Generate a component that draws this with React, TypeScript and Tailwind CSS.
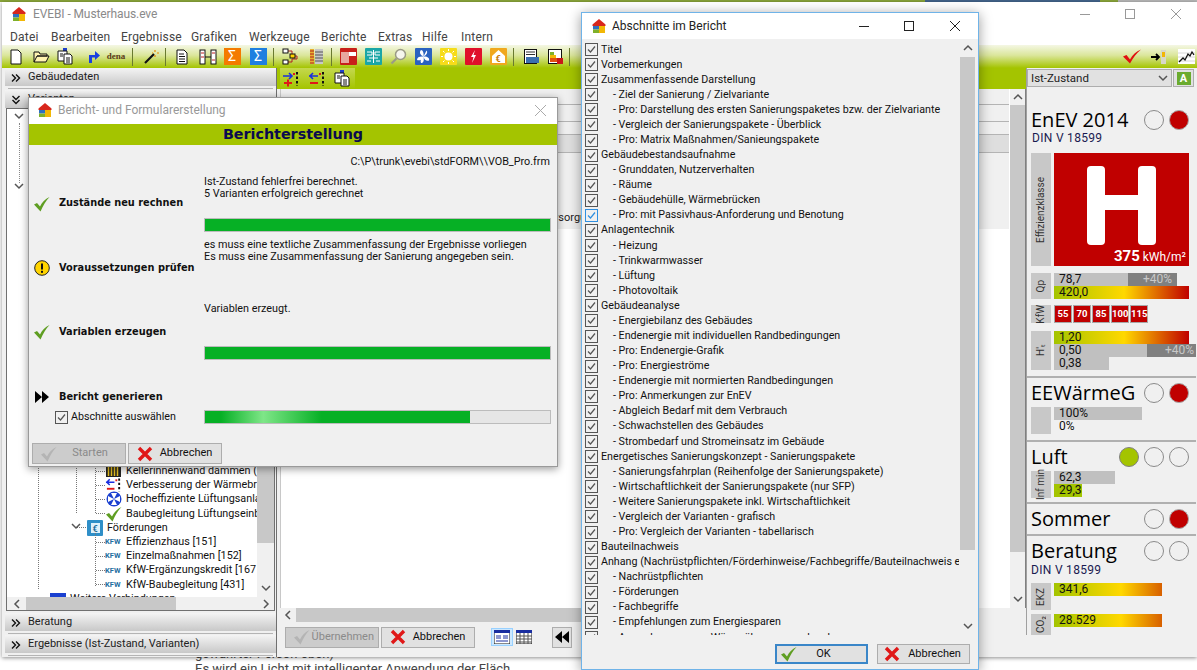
import type { ReactNode } from "react";

const Logo = ({ size = 14 }: { size?: number }) => (
  <svg width={size} height={size} viewBox="0 0 14 14">
    <path d="M7 0 13.5 5.5V7H.5V5.5Z" fill="#d8261c" />
    <rect x="1" y="7" width="6" height="3.5" fill="#2f6fc0" />
    <rect x="7" y="7" width="6" height="7" fill="#f2b705" />
    <rect x="1" y="10.5" width="6" height="3.5" fill="#7fb02a" />
  </svg>
);

const Check = ({ size = 16, color = "#5f9e22" }: { size?: number; color?: string }) => (
  <svg width={size} height={size} viewBox="0 0 16 16">
    <path d="M0 8.5 3 7l3 3.5C8 6.5 11 3 15.5 1 11.500 5 9 10 6.500 15.500Z" fill={color} />
  </svg>
);

const Cross = () => (
  <svg width="16" height="16" viewBox="0 0 16 16">
    <path d="M2 2 14 14M14 2 2 14" stroke="#e01818" strokeWidth="3.400" />
  </svg>
);

const Warn = () => (
  <svg width="16" height="16" viewBox="0 0 16 16">
    <circle cx="8" cy="8" r="7.300" fill="#ffd400" stroke="#222" strokeWidth="1" />
    <rect x="7" y="3.500" width="2" height="6" fill="#111" />
    <rect x="7" y="10.800" width="2" height="2" fill="#111" />
  </svg>
);

const DoubleArrow = () => (
  <svg width="16" height="14" viewBox="0 0 16 14">
    <path d="M1 1 8 7 1 13ZM8 1 15 7 8 13Z" fill="#000" />
  </svg>
);

const Chevrons = ({ down = false }: { down?: boolean }) => (
  <svg width="10" height="10" viewBox="0 0 10 10" className={down ? "rotate-90" : ""}>
    <path d="M1 1.500 4.500 5 1 8.500M5 1.500 8.500 5 5 8.500" fill="none" stroke="#111" strokeWidth="1.400" />
  </svg>
);

const Chev = ({ dir }: { dir: "up" | "down" | "left" | "right" }) => {
  const d = { up: "M1 6 5 2 9 6", down: "M1 2 5 6 9 2", left: "M6 1 2 5 6 9", right: "M3 1 7 5 3 9" }[dir];
  return (
    <svg width="10" height="10" viewBox="0 0 10 10" className="block">
      <path d={d} fill="none" stroke="#555" strokeWidth="1.500" />
    </svg>
  );
};

const Tile = ({ bg, children }: { bg: string; children?: ReactNode }) => (
  <svg width="17" height="17" viewBox="0 0 17 17">
    <rect width="17" height="17" rx="1" fill={bg} />
    {children}
  </svg>
);

const Doc = ({ plain = false }: { plain?: boolean }) => (
  <svg width="16" height="16" viewBox="0 0 16 16">
    <path d="M3 1H10L13 4V15H3Z" fill="#fff" stroke="#111" />
    {!plain && <path d="M5 5H10M5 7.500H11M5 10H11M5 12.500H11" stroke="#111" />}
  </svg>
);

const Copy = () => (
  <svg width="17" height="17" viewBox="0 0 17 17">
    <rect x="6" y="0" width="4" height="4" fill="#1f3fc8" />
    <path d="M1 3H10V13H1Z" fill="#fff" stroke="#111" />
    <path d="M7 6H13L15 8V16H7Z" fill="#fff" stroke="#111" />
    <path d="M3 6H6M3 8H6M9 10H13M9 12H13M9 14H13" stroke="#111" />
  </svg>
);

const Schema = () => (
  <svg width="17" height="17" viewBox="0 0 17 17">
    <path d="M4 3H10V8H15V11H10V14H4" fill="none" stroke="#b02020" />
    <rect x="1" y="1" width="5" height="4" fill="#fff" stroke="#111" />
    <rect x="8" y="6" width="5" height="4" fill="#ffd400" stroke="#111" />
    <rect x="1" y="12" width="5" height="4" fill="#fff" stroke="#111" />
  </svg>
);

const Wall = () => (
  <svg width="17" height="17" viewBox="0 0 17 17">
    <rect x="2" y="1" width="4" height="15" fill="#e8b030" />
    <path d="M2 3H6M2 6H6M2 9H6M2 12H6M2 15H6" stroke="#b02020" />
    <rect x="7" y="1" width="8" height="15" fill="#c8c8c8" />
    <path d="M7 4H15M7 7H15M7 10H15M7 13H15" stroke="#555" />
  </svg>
);

const Fan = ({ bg = "#2a62c0" }: { bg?: string }) => (
  <Tile bg={bg}>
    <path d="M8.500 8.500C5 7 4 4 6 2c2 0 3 3 2.500 6.500ZM8.500 8.500C12 7 13 4 11.500 2.500M8.500 8.500C12 8 15 10 14 12.500c-2 1-5-.5-5.500-4ZM8.500 8.500C6 10 5 13 6 15c2 .5 3.500-2 2.500-6.500ZM8.500 8.500C5 8 2 9 2 12c2 1 5 0 6.500-3.500Z" fill="#fff" />
  </Tile>
);

const Schiebe = ({ minus = false }: { minus?: boolean }) => (
  <svg width="18" height="16" viewBox="0 0 18 16">
    <path d={minus ? "M1 5H10M5 2 2 5 5 8" : "M1 5H10M7 2 10 5 7 8"} fill="none" stroke="#1a2ee0" strokeWidth="1.600" />
    <path d={minus ? "M2 12H10" : "M2 12H10M6 8.500V15.500"} stroke="#e01818" strokeWidth="2" />
    <path d="M15 1V15" stroke="#111" strokeWidth="2" strokeDasharray="2.500 2" />
    <rect x="11" y="2" width="2" height="2" fill="#e01818" />
  </svg>
);

const Kfw = () => (
  <span className="w-[17px] text-[7.500px] leading-none font-bold text-[#1f6f9f] shrink-0">KFW</span>
);

const Toolbar = () => (
  <div className="h-[23px] shrink-0 flex items-center pl-[5px] pr-[1px] bg-[linear-gradient(180deg,#f4f7e4,#dbe69b_45%,#a4c400)]">
    <span className="w-[18px] flex justify-center"><Doc plain /></span>
    <span className="ml-[7px] w-[18px] flex justify-center">
      <svg width="17" height="15" viewBox="0 0 17 15">
        <path d="M1 13V3H6L7 5H14V7H4L1 13H13L16 7H4" fill="#fff3b0" stroke="#111" />
      </svg>
    </span>
    <span className="ml-[6px] w-[18px] flex justify-center"><Copy /></span>
    <span className="ml-[10px] w-[18px] flex justify-center">
      <svg width="15" height="15" viewBox="0 0 15 15">
        <path d="M3 14V6H9V2L14 6.500 9 11V8.500H6V14Z" fill="#1a40e0" />
      </svg>
    </span>
    <span className="ml-[2px] w-[24px] text-center [font-family:'Liberation_Serif',serif] text-[9px] font-bold text-[#5b3b1a]">dena</span>
    <Sep cls="ml-[4px]" />
    <span className="ml-[9px] w-[18px] flex justify-center">
      <svg width="16" height="16" viewBox="0 0 16 16">
        <path d="M2 14 11 5" stroke="#111" strokeWidth="2.200" />
        <path d="M12 1V3M14 4H16M12 6V8M9 4H10" stroke="#e88a00" strokeWidth="1.200" />
      </svg>
    </span>
    <Sep cls="ml-[5px]" />
    <span className="ml-[7px] w-[18px] flex justify-center"><Doc /></span>
    <span className="ml-[8px] w-[18px] flex justify-center">
      <svg width="18" height="16" viewBox="0 0 18 16">
        <rect x="1" y="1" width="5" height="14" fill="#fff" stroke="#111" />
        <rect x="12" y="1" width="5" height="14" fill="#fff" stroke="#111" />
        <path d="M6 8H12" stroke="#111" />
        <path d="M2 4H5M2 8H5M13 4H16M13 11H16" stroke="#c02020" />
      </svg>
    </span>
    <span className="ml-[6px] w-[18px] flex justify-center">
      <span className="w-[17px] h-[17px] bg-[#f47a00] text-white text-[14px] leading-[16px] text-center">Σ</span>
    </span>
    <span className="ml-[8px] w-[18px] flex justify-center">
      <span className="w-[17px] h-[17px] bg-[#1f7fe0] text-white text-[14px] leading-[16px] text-center">Σ</span>
    </span>
    <Sep cls="ml-[6px]" />
    <span className="ml-[7px] w-[18px] flex justify-center"><Schema /></span>
    <span className="ml-[8px] w-[18px] flex justify-center"><Wall /></span>
    <Sep cls="ml-[6px]" />
    <span className="ml-[7px] w-[18px] flex justify-center">
      <Tile bg="#c8201a">
        <rect x="1" y="4" width="8" height="11" fill="#e8a8a0" />
        <rect x="9" y="4" width="7" height="4" fill="#fff" />
      </Tile>
    </span>
    <span className="ml-[7px] w-[18px] flex justify-center">
      <Tile bg="#1aa6a6">
        <path d="M2 4H7V7H2M15 4H10V7H15M8.500 2V9M4 10H13M2 13H6M11 13H15M8.500 9V15" fill="none" stroke="#fff" />
      </Tile>
    </span>
    <span className="ml-[7px] w-[18px] flex justify-center">
      <svg width="17" height="17" viewBox="0 0 17 17">
        <circle cx="10.500" cy="6.500" r="5" fill="#f6f6ee" stroke="#9a9a86" strokeWidth="1.500" />
        <path d="M6.500 10.500 1.500 15.500" stroke="#9a9a86" strokeWidth="2.200" />
      </svg>
    </span>
    <span className="ml-[7px] w-[18px] flex justify-center"><Fan /></span>
    <span className="ml-[7px] w-[18px] flex justify-center">
      <Tile bg="#f6dc1a">
        <circle cx="8.500" cy="8.500" r="4" fill="#fff" />
        <path d="M8.500 1V3M8.500 14V16M1 8.500H3M14 8.500H16M3 3 4.500 4.500M12.500 12.500 14 14M3 14 4.500 12.500M12.500 4.500 14 3" stroke="#fff" />
      </Tile>
    </span>
    <span className="ml-[7px] w-[18px] flex justify-center">
      <Tile bg="#e0102a">
        <path d="M10 2 6 9H8.500L7 15 11 7H8.500Z" fill="#fff" />
      </Tile>
    </span>
    <span className="ml-[7px] w-[18px] flex justify-center">
      <Tile bg="#f0a81e">
        <path d="M8.500 2 15 8V15H2V8Z" fill="#fff" />
        <text x="5.500" y="13.500" fontSize="9" fontWeight="700" fill="#c87800">€</text>
      </Tile>
    </span>
    <Sep cls="ml-[6px]" />
    <span className="ml-[8px] w-[18px] flex justify-center">
      <svg width="17" height="17" viewBox="0 0 17 17">
        <rect x="1.500" y="1.500" width="12" height="14" fill="#fff" stroke="#111" />
        <path d="M3 4H12M3 6.500H12" stroke="#333" />
        <rect x="3" y="9" width="13" height="6" fill="#3a6fb0" />
      </svg>
    </span>
    <span className="ml-[6px] w-[18px] flex justify-center">
      <svg width="17" height="17" viewBox="0 0 17 17">
        <rect x="1.500" y="1.500" width="13" height="14" fill="#fff" stroke="#111" />
        <rect x="3" y="4" width="4" height="3" fill="#7fb02a" />
        <rect x="3" y="7" width="6" height="3" fill="#f2b705" />
        <rect x="3" y="10" width="8" height="4" fill="#e05010" />
        <rect x="10" y="10" width="6" height="6" fill="#c81818" />
      </svg>
    </span>
    <Sep cls="ml-[5px]" />
    <span className="ml-auto flex items-center">
      <svg width="18" height="15" viewBox="0 0 18 15">
        <path d="M0 7.500 3.500 6 7 10.500C9.500 6 13 2.500 18 0.500 13.500 4 10 9 7 14.500Z" fill="#e01010" />
      </svg>
      <svg width="16" height="16" viewBox="0 0 16 16" className="ml-[10px]">
        <path d="M0 8H7M5 5 8 8 5 11" fill="none" stroke="#000" strokeWidth="1.800" />
        <rect x="10" y="1" width="5" height="14" fill="#d8d8c8" />
        <rect x="11" y="3" width="3" height="5" fill="#f2b705" />
      </svg>
      <svg width="17" height="15" viewBox="0 0 17 15" className="ml-[11px] mr-[1px]">
        <rect width="17" height="15" fill="#fff" />
        <path d="M0 4H17M0 8H17M0 12H17" stroke="#d8d8d8" />
        <path d="M1 13 5 9 7 11 10 5 12 7 14 3 16 6" fill="none" stroke="#111" strokeWidth="1.300" />
      </svg>
    </span>
  </div>
);

const Sep = ({ cls }: { cls: string }) => <span className={`${cls} w-[1px] h-[18px] bg-[#6a7a30] shrink-0`} />;

const Bar = ({ label, open = false }: { label: string; open?: boolean }) => (
  <div className="h-[18px] shrink-0 flex items-center pl-[6px] pt-[1px] bg-[linear-gradient(180deg,#f4f4f4,#c8c8c8)] text-[11px] text-[#222]">
    <Chevrons down={open} />
    <span className="ml-[7px]">{label}</span>
  </div>
);

const BarSep = () => (
  <div className="h-[4px] shrink-0 flex items-center px-[3px] bg-[#f0f0f0]">
    <div className="h-[1px] w-full bg-[#b4b4b4]" />
  </div>
);

const TreeRow = ({ indent, icon, text }: { indent: string; icon: ReactNode; text: string }) => (
  <div className={`h-[14.200px] flex items-center whitespace-nowrap ${indent}`}>
    <span className="w-[9px] -ml-[9px] shrink-0 border-t border-dotted border-[#777]" />
    <span className="w-[17px] flex justify-center shrink-0">{icon}</span>
    <span className="ml-[4px]">{text}</span>
  </div>
);

const LeftPanel = () => (
  <div className="w-[272px] ml-[3px] flex flex-col border-r border-b border-[#707070] bg-[#f0f0f0]">
    <Bar label="Gebäudedaten" />
    <BarSep />
    <Bar label="Varianten" open />
    <div className="h-[503px] shrink-0 mx-[1px] border border-[#707070] bg-white flex flex-col relative overflow-hidden">
      <div className="flex-1 flex min-h-0">
        <div className="flex-1 min-w-0 overflow-hidden relative">
          <span className="absolute left-[7px] top-[3px]"><Chev dir="down" /></span>
          <span className="absolute left-[12px] top-[14px] h-[60px] border-l border-dotted border-[#888]" />
          <span className="absolute left-[7px] top-[73px]"><Chev dir="down" /></span>
          <span className="absolute left-[31px] top-[350px] h-[130px] border-l border-dotted border-[#777]" />
          <span className="absolute left-[69px] top-[350px] h-[54px] border-l border-dotted border-[#777]" />
          <span className="absolute left-[88px] top-[350px] h-[54px] border-l border-dotted border-[#777]" />
          <span className="absolute left-[88px] top-[422px] h-[55px] border-l border-dotted border-[#777]" />
          <span className="absolute left-[64px] top-[413px]"><Chev dir="down" /></span>
          <div className="pt-[355px] text-[10.800px] text-[#111]">
            <TreeRow
              indent="pl-[98px]"
              text="Kellerinnenwand dämmen (1"
              icon={
                <svg width="15" height="12" viewBox="0 0 15 12">
                  <rect width="15" height="12" fill="#222" />
                  <path d="M2.500 0V11M5.500 0V11M8.500 0V11M11.500 0V11" stroke="#e8c020" strokeWidth="1.500" />
                </svg>
              }
            />
            <TreeRow indent="pl-[98px]" text="Verbesserung der Wärmebr" icon={<Schiebe minus />} />
            <TreeRow indent="pl-[98px]" text="Hocheffiziente Lüftungsanla" icon={<svg width="16" height="16" viewBox="0 0 16 16"><circle cx="8" cy="8" r="7.500" fill="#1a40d0" /><path d="M8 8 5 2h6ZM8 8l-3 6h6ZM8 8 2 5v6ZM8 8l6-3v6Z" fill="#fff" /></svg>} />
            <TreeRow indent="pl-[98px]" text="Baubegleitung Lüftungseinb" icon={<Check />} />
            <TreeRow
              indent="pl-[79px]"
              text="Förderungen"
              icon={
                <svg width="16" height="16" viewBox="0 0 16 16">
                  <rect width="16" height="16" rx="1" fill="#2f8fc8" />
                  <rect x="4" y="3" width="9" height="10" fill="#dff0fa" />
                  <text x="5.500" y="11.500" fontSize="9" fontWeight="700" fill="#1f6f9f">€</text>
                </svg>
              }
            />
            <TreeRow indent="pl-[98px]" text="Effizienzhaus [151]" icon={<Kfw />} />
            <TreeRow indent="pl-[98px]" text="Einzelmaßnahmen [152]" icon={<Kfw />} />
            <TreeRow indent="pl-[98px]" text="KfW-Ergänzungskredit [167" icon={<Kfw />} />
            <TreeRow indent="pl-[98px]" text="KfW-Baubegleitung [431]" icon={<Kfw />} />
            <TreeRow indent="pl-[42px]" text="Weitere Verbindungen" icon={<span className="w-[16px] h-[12px] bg-[#1a40d0]" />} />
          </div>
        </div>
        <div className="w-[17px] shrink-0 bg-[#f0f0f0] flex flex-col items-center">
          <div className="h-[14px] w-full bg-white" />
          <div className="w-full h-[420px] bg-[#c8c8c8]" />
          <div className="mt-auto mb-[3px]"><Chev dir="down" /></div>
        </div>
      </div>
      <div className="h-[13px] shrink-0 bg-[#f0f0f0] flex items-center pl-[6px] pr-[3px]">
        <Chev dir="left" />
        <div className="ml-[3px] h-full w-[150px] bg-[#c8c8c8]" />
        <div className="ml-auto"><Chev dir="right" /></div>
      </div>
    </div>
    <div className="h-[2px] shrink-0" />
    <Bar label="Beratung" />
    <BarSep />
    <Bar label="Ergebnisse (Ist-Zustand, Varianten)" />
    <BarSep />
  </div>
);

const Center = () => (
  <div className="w-[749px] flex flex-col bg-[#f0f0f0]">
    <div className="h-[21px] shrink-0 bg-[#a4c400] pl-[3px]">
      <div className="h-full w-[75px] flex items-center pl-[2px] gap-[8px] bg-[linear-gradient(180deg,#c4d84e,#a4c400)]">
        <Schiebe />
        <Schiebe minus />
        <Copy />
      </div>
    </div>
    <div className="flex-1 min-h-0 flex ml-[3px] border-l border-[#c8c8c8] bg-white">
      <div className="flex-1 min-w-0 text-[11px] text-[#222]">
        <div className="bg-[#f0f0f0]">
          <div className="h-[16px] border-b border-[#b4b4b4]" />
          <div className="h-[17px] border-b border-[#b4b4b4]" />
          <div className="h-[13px] border-b border-[#b4b4b4]" />
          <div className="h-[18px] border-b border-[#b4b4b4] bg-[#dedede]" />
          <div className="h-[76px] pl-[261px] pt-[59px] leading-[12px]">Versorgung</div>
        </div>
      </div>
      <div className="w-[17px] shrink-0 bg-[#f0f0f0] border-l border-white border-r border-r-[#808080] flex flex-col items-center pt-[4px]">
        <Chev dir="up" />
        <div className="mt-[2px] w-full h-[447px] bg-[#c8c8c8]" />
        <div className="mt-auto mb-[3px]"><Chev dir="down" /></div>
      </div>
    </div>
    <div className="h-[14px] shrink-0 ml-[3px] flex items-center pl-[4px] bg-[#f0f0f0]">
      <Chev dir="left" />
      <div className="ml-[2px] h-full w-[680px] bg-[#c8c8c8]" />
    </div>
    <div className="h-[35px] shrink-0 flex items-center pl-[8px] pb-[5px]">
      <Btn disabled icon={<Check color="#b4b4b4" />} label="Übernehmen" />
      <Btn cls="ml-[2px]" icon={<Cross />} label="Abbrechen" />
      <span className="ml-[16px] w-[22px] h-[18px] flex items-center justify-center bg-[#cce8ff] border border-[#99d1ff]">
        <GridIcon split />
      </span>
      <span className="ml-[3px] w-[16px] flex items-center justify-center"><GridIcon /></span>
      <span className="ml-[20px] w-[20px] h-[21px] flex items-center justify-center border border-[#adadad] bg-[#e1e1e1]">
        <svg width="14" height="12" viewBox="0 0 14 12"><path d="M7 0 0 6 7 12ZM14 0 7 6 14 12Z" fill="#000" /></svg>
      </span>
    </div>
  </div>
);

const GridIcon = ({ split = false }: { split?: boolean }) => (
  <svg width="16" height="14" viewBox="0 0 16 14">
    <rect width="16" height="14" fill="#fff" stroke="#111" />
    <rect width="16" height="3" fill="#1a2ea0" />
    {split ? (
      <path d="M2 6H7M2 8H7M9 6H14M9 8H14M2 11H14" stroke="#1a2ea0" />
    ) : (
      <path d="M0 6H16M0 9H16M0 12H16M4 3V14M8 3V14M12 3V14" stroke="#555" />
    )}
  </svg>
);

const Btn = ({
  label,
  icon,
  disabled = false,
  cls = "",
}: {
  label: string;
  icon: ReactNode;
  disabled?: boolean;
  cls?: string;
}) => (
  <div
    className={`${cls} w-[94px] h-[21px] shrink-0 flex items-center border border-[#adadad] text-[11px] pl-[6px] ${
      disabled ? "bg-[#cccccc] text-[#8a8a8a]" : "bg-[#e1e1e1] text-[#111]"
    }`}
  >
    <span className="w-[20px] flex justify-center">{icon}</span>
    <span className="flex-1 text-center pr-[4px]">{label}</span>
  </div>
);

const Circle = ({ color }: { color?: "red" | "lime" }) => (
  <span
    className={`w-[20px] h-[20px] rounded-full border shrink-0 ${
      color === "red"
        ? "bg-[#c00000] border-[#a8a8a8]"
        : color === "lime"
        ? "bg-[#a4c400] border-[#808080]"
        : "bg-[#f0f0f0] border-[#8a8a8a]"
    }`}
  />
);

const Heading = ({ title, cls, children }: { title: string; cls: string; children: ReactNode }) => (
  <div className={`${cls} h-[20px] flex items-center justify-between pr-[7px]`}>
    <span className="text-[20px] leading-[20px] [font-family:'Open_Sans',sans-serif] text-black">{title}</span>
    <span className="flex gap-[5px]">{children}</span>
  </div>
);

const Din = ({ cls }: { cls: string }) => (
  <div className={`${cls} h-[12px] text-[12px] leading-[12px] tracking-[0.3px] text-[#1a1a50]`}>DIN V 18599</div>
);

const Strip = ({ children, h }: { children?: ReactNode; h: string }) => (
  <div className={`${h} w-[20px] shrink-0 bg-[#c8c8c8] flex items-center justify-center`}>
    <span className="[writing-mode:vertical-rl] rotate-180 text-[10px] leading-none text-[#333] whitespace-nowrap">
      {children}
    </span>
  </div>
);

const Val = ({ cls, text }: { cls: string; text?: string }) => (
  <div className={`${cls} h-[13px] text-[12px] leading-[13px] pl-[5px] text-[#111] shrink-0`}>{text}</div>
);

const Rating = "bg-[linear-gradient(90deg,#a4c400,#ffd800_52%,#c00000)]";

const RightPanel = () => (
  <div className="w-[170px] flex flex-col bg-[#f0f0f0] overflow-hidden">
    <div className="h-[567px] shrink-0 border-l border-[#a0a0a0] flex flex-col">
      <div className="h-[19px] shrink-0 flex items-center pt-[1px] gap-[1px]">
        <div className="w-[145px] h-[18px] bg-[#e1e1e1] border border-[#adadad] flex items-center pl-[3px] pt-[1px] text-[11.500px] text-[#222]">
          <span className="flex-1">Ist-Zustand</span>
          <span className="mr-[3px]"><Chev dir="down" /></span>
        </div>
        <div className="w-[21px] h-[18px] border border-[#adadad] bg-[#e1e1e1] flex items-center justify-center">
          <span className="w-[14px] h-[13px] bg-[#6aab2e] text-white text-[11px] font-bold leading-[13px] text-center">A</span>
        </div>
      </div>

      <section className="pl-[4px] h-[291px] shrink-0 border-b-2 border-[#b0b0b0]">
        <Heading title="EnEV 2014" cls="mt-[23px]">
          <Circle />
          <Circle color="red" />
        </Heading>
        <Din cls="mt-[2px] ml-[1px]" />
        <div className="mt-[9px] flex gap-[3px]">
          <Strip h="h-[113px]">Effizienzklasse</Strip>
          <div className="w-[135px] h-[113px] bg-[#c00000] flex flex-col items-center">
            <div className="mt-[13px] w-[69px] h-[79px] flex justify-between relative">
              <span className="w-[18px] bg-white rounded-t-[4px] rounded-b-[4px]" />
              <span className="absolute left-0 right-0 top-[29px] h-[15px] bg-white" />
              <span className="w-[18px] bg-white rounded-t-[4px] rounded-b-[4px]" />
            </div>
            <div className="self-end mt-[4px] pr-[3px] text-white text-[12px] leading-[14px]">
              <span className="font-bold text-[15px]">375</span> kWh/m²
            </div>
          </div>
        </div>
        <div className="mt-[7px] flex gap-[3px]">
          <Strip h="h-[26px]">Qp</Strip>
          <div>
            <div className="flex">
              <Val cls="w-[74px] bg-[#c0c0c0]" text="78,7" />
              <div className="w-[49px] h-[13px] bg-[#808080] text-[#c8c8c8] text-[12px] leading-[13px] text-right pr-[5px]">+40%</div>
            </div>
            <Val cls={`w-[135px] ${Rating}`} text="420,0" />
          </div>
        </div>
        <div className="mt-[6px] flex gap-[3px]">
          <Strip h="h-[18px]">KfW</Strip>
          <div className="flex gap-[1px]">
            {["55", "70", "85", "100", "115"].map((k) => (
              <span
                key={k}
                className="w-[18px] h-[18px] bg-[#c00000] border border-[#a8a8a8] text-white text-[9.500px] font-bold leading-[16px] text-center"
              >
                {k}
              </span>
            ))}
          </div>
        </div>
        <div className="mt-[8px] flex gap-[3px]">
          <Strip h="h-[39px]">H'ₜ</Strip>
          <div>
            <Val cls={`w-[135px] ${Rating}`} text="1,20" />
            <div className="flex">
              <Val cls="w-[93px] bg-[#c0c0c0]" text="0,50" />
              <div className="w-[49px] h-[13px] shrink-0 bg-[#808080] text-[#c8c8c8] text-[12px] leading-[13px] text-right pr-[2px]">+40%</div>
            </div>
            <Val cls="w-[55px] bg-[#c0c0c0]" text="0,38" />
          </div>
        </div>
      </section>

      <section className="pl-[4px] h-[64px] shrink-0 border-b-2 border-[#b0b0b0]">
        <Heading title="EEWärmeG" cls="mt-[5px]">
          <Circle />
          <Circle color="red" />
        </Heading>
        <div className="mt-[4px] flex gap-[3px]">
          <Strip h="h-[27px]" />
          <div>
            <Val cls="w-[88px] bg-[#c0c0c0]" text="100%" />
            <Val cls="w-[88px]" text="0%" />
          </div>
        </div>
      </section>

      <section className="pl-[4px] h-[62px] shrink-0 border-b-2 border-[#b0b0b0]">
        <Heading title="Luft" cls="mt-[5px]">
          <Circle color="lime" />
          <Circle />
          <Circle />
        </Heading>
        <div className="mt-[4px] flex gap-[3px]">
          <Strip h="h-[27px]">Inf min</Strip>
          <div>
            <Val cls="w-[61px] bg-[#c0c0c0]" text="62,3" />
            <Val cls="w-[28px] bg-[#a4c400]" text="29,3" />
          </div>
        </div>
      </section>

      <section className="pl-[4px] h-[32px] shrink-0 border-b-2 border-[#b0b0b0]">
        <Heading title="Sommer" cls="mt-[5px]">
          <Circle />
          <Circle color="red" />
        </Heading>
      </section>

      <section className="pl-[4px] flex-1 min-h-0">
        <Heading title="Beratung" cls="mt-[5px]">
          <Circle />
          <Circle />
        </Heading>
        <Din cls="mt-[3px]" />
        <div className="mt-[7px] flex gap-[3px]">
          <Strip h="h-[27px]">EKZ</Strip>
          <Val cls="w-[108px] bg-[linear-gradient(90deg,#a4c400,#ffd800_62%,#d86000)]" text="341,6" />
        </div>
        <div className="mt-[4px] flex gap-[3px]">
          <Strip h="h-[21px]">CO₂</Strip>
          <Val cls="w-[108px] bg-[linear-gradient(90deg,#a4c400,#ffd800_62%,#d86000)]" text="28.529" />
        </div>
      </section>
    </div>
  </div>
);

const MainWindow = () => (
  <div className="absolute left-[2px] top-[2px] w-[1195px] h-[655px] flex flex-col bg-white shadow-[0_1px_4px_rgba(0,0,0,0.45)]">
    <div className="h-[26px] shrink-0 flex items-center pl-[10px] pb-[2px] text-[12px] text-[#8a8a8a] relative">
      <Logo />
      <span className="ml-[7px] tracking-[-0.1px]">EVEBI - Musterhaus.eve</span>
      <div className="ml-auto flex items-center text-[#999]">
        <span className="w-[10px] h-[1px] bg-[#999] mr-[35px]" />
        <span className="w-[10px] h-[10px] border border-[#999] mr-[36px]" />
        <svg width="10" height="10" viewBox="0 0 10 10" className="mr-[16px]">
          <path d="M0 0 10 10M10 0 0 10" stroke="#999" />
        </svg>
      </div>
    </div>
    <div className="h-[17px] shrink-0 flex items-center pl-[8px] text-[12px] text-[#444] tracking-[0.2px]">
      <span className="w-[41px]">Datei</span>
      <span className="w-[70px]">Bearbeiten</span>
      <span className="w-[70px]">Ergebnisse</span>
      <span className="w-[58px]">Grafiken</span>
      <span className="w-[72px]">Werkzeuge</span>
      <span className="w-[57px]">Berichte</span>
      <span className="w-[44px]">Extras</span>
      <span className="w-[39px]">Hilfe</span>
      <span>Intern</span>
    </div>
    <Toolbar />
    <div className="flex-1 min-h-0 flex bg-[#f0f0f0]">
      <LeftPanel />
      <Center />
      <RightPanel />
    </div>
  </div>
);

const Progress = ({ children }: { children?: ReactNode }) => (
  <div className="w-[347px] h-[14px] border border-[#bcbcbc] bg-[#e6e6e6] relative overflow-hidden">{children}</div>
);

const ReportDialog = () => (
  <div className="absolute left-[28px] top-[97px] w-[530px] h-[370px] flex flex-col bg-[#f0f0f0] border border-[#9a9a9a] shadow-[0_2px_8px_rgba(0,0,0,0.4)] text-[10.800px] text-[#111]">
    <div className="h-[26px] shrink-0 bg-white flex items-center pl-[9px] pb-[2px] text-[12px] text-[#999]">
      <Logo />
      <span className="ml-[6px]">Bericht- und Formularerstellung</span>
      <svg width="11" height="11" viewBox="0 0 11 11" className="ml-auto mr-[11px]">
        <path d="M0 0 11 11M11 0 0 11" stroke="#aaa" />
      </svg>
    </div>
    <div className="h-[21px] shrink-0 bg-[#a4c400] text-center text-[14.300px] leading-[21px] font-bold [font-family:'DejaVu_Sans',sans-serif] text-[#0a0a50]">
      Berichterstellung
    </div>
    <div className="text-right pr-[7px] pt-[11px] leading-[12px] h-[29px] shrink-0">C:\P\trunk\evebi\stdFORM\\VOB_Pro.frm</div>

    <div className="h-[59px] shrink-0 flex">
      <StepLabel icon={<Check />} label="Zustände neu rechnen" />
      <div className="w-[347px] pt-[2px]">
        <div className="leading-[11.500px] mb-[19px]">
          Ist-Zustand fehlerfrei berechnet.
          <br />5 Varianten erfolgreich gerechnet
        </div>
        <Progress><div className="h-full w-full bg-[#06b025]" /></Progress>
      </div>
    </div>
    <div className="h-[60px] mt-[5px] shrink-0 flex">
      <StepLabel icon={<Warn />} label="Voraussetzungen prüfen" />
      <div className="w-[347px] pt-[1px] leading-[12px]">
        es muss eine textliche Zusammenfassung der Ergebnisse vorliegen
        <br />
        Es muss eine Zusammenfassung der Sanierung angegeben sein.
      </div>
    </div>
    <div className="h-[60px] mt-[4px] shrink-0 flex">
      <StepLabel icon={<Check />} label="Variablen erzeugen" />
      <div className="w-[347px] pt-[1px]">
        <div className="leading-[12px] mb-[31px]">Variablen erzeugt.</div>
        <Progress><div className="h-full w-full bg-[#06b025]" /></Progress>
      </div>
    </div>
    <div className="mt-[28px] shrink-0 flex items-center h-[14px] pl-[5px]">
      <span className="w-[16px] flex justify-center"><DoubleArrow /></span>
      <span className="ml-[9px] font-bold text-[9.800px] [font-family:'DejaVu_Sans',sans-serif]">Bericht generieren</span>
    </div>
    <div className="mt-[6px] h-[14px] shrink-0 flex items-center">
      <div className="w-[175px] flex items-center pl-[26px]">
        <CheckBox />
        <span className="ml-[3px] text-[10.700px]">Abschnitte auswählen</span>
      </div>
      <Progress>
        <div className="h-full w-[265px] bg-[linear-gradient(90deg,#06b025,#06b025_6%,#7fe688_22%,#06b025_44%,#06b025)]" />
      </Progress>
    </div>
    <div className="mt-[19px] pl-[3px] flex gap-[2px]">
      <Btn disabled icon={<Check color="#b4b4b4" />} label="Starten" />
      <Btn icon={<Cross />} label="Abbrechen" />
    </div>
  </div>
);

const StepLabel = ({ icon, label }: { icon: ReactNode; label: string }) => (
  <div className="w-[175px] shrink-0 flex items-center pl-[5px]">
    <span className="w-[16px] flex justify-center">{icon}</span>
    <span className="ml-[9px] font-bold text-[9.800px] [font-family:'DejaVu_Sans',sans-serif] whitespace-nowrap">{label}</span>
  </div>
);

const CheckBox = ({ blue = false }: { blue?: boolean }) => (
  <span className={`w-[13px] h-[13px] shrink-0 border flex items-center justify-center ${blue ? "border-[#2f8fe0]" : "border-[#555]"}`}>
    <svg width="9" height="9" viewBox="0 0 9 9">
      <path d="M1 4.500 3.500 7 8 1.500" fill="none" stroke={blue ? "#2f8fe0" : "#555"} strokeWidth="1.200" />
    </svg>
  </span>
);

const sections: [string, boolean][] = [
  ["Titel", false],
  ["Vorbemerkungen", false],
  ["Zusammenfassende Darstellung", false],
  ["Ziel der Sanierung / Zielvariante", true],
  ["Pro: Darstellung des ersten Sanierungspaketes bzw. der Zielvariante", true],
  ["Vergleich der Sanierungspakete - Überblick", true],
  ["Pro: Matrix Maßnahmen/Sanieungspakete", true],
  ["Gebäudebestandsaufnahme", false],
  ["Grunddaten, Nutzerverhalten", true],
  ["Räume", true],
  ["Gebäudehülle, Wärmebrücken", true],
  ["Pro: mit Passivhaus-Anforderung und Benotung", true],
  ["Anlagentechnik", false],
  ["Heizung", true],
  ["Trinkwarmwasser", true],
  ["Lüftung", true],
  ["Photovoltaik", true],
  ["Gebäudeanalyse", false],
  ["Energiebilanz des Gebäudes", true],
  ["Endenergie mit individuellen Randbedingungen", true],
  ["Pro: Endenergie-Grafik", true],
  ["Pro: Energieströme", true],
  ["Endenergie mit normierten Randbedingungen", true],
  ["Pro: Anmerkungen zur EnEV", true],
  ["Abgleich Bedarf mit dem Verbrauch", true],
  ["Schwachstellen des Gebäudes", true],
  ["Strombedarf und Stromeinsatz im Gebäude", true],
  ["Energetisches Sanierungskonzept - Sanierungspakete", false],
  ["Sanierungsfahrplan (Reihenfolge der Sanierungspakete)", true],
  ["Wirtschaftlichkeit der Sanierungspakete (nur SFP)", true],
  ["Weitere Sanierungspakete inkl. Wirtschaftlichkeit", true],
  ["Vergleich der Varianten - grafisch", true],
  ["Pro: Vergleich der Varianten - tabellarisch", true],
  ["Bauteilnachweis", false],
  ["Anhang (Nachrüstpflichten/Förderhinweise/Fachbegriffe/Bauteilnachweis etc.)", false],
  ["Nachrüstpflichten", true],
  ["Förderungen", true],
  ["Fachbegriffe", true],
  ["Empfehlungen zum Energiesparen", true],
  ["Anmerkungen zum Wärmeübergang und mehr", true],
];

const SectionsDialog = () => (
  <div className="absolute left-[581px] top-[12px] w-[398px] h-[658px] flex flex-col bg-[#f0f0f0] border border-[#6fb3e8] shadow-[0_2px_12px_rgba(0,0,0,0.4)]">
    <div className="h-[26px] shrink-0 bg-white flex items-center pl-[10px] text-[12px] text-[#222]">
      <Logo />
      <span className="ml-[6px]">Abschnitte im Bericht</span>
      <div className="ml-auto flex items-center">
        <span className="w-[10px] h-[1px] bg-[#222] mr-[35px]" />
        <span className="w-[10px] h-[10px] border border-[#222] mr-[36px]" />
        <svg width="10" height="10" viewBox="0 0 10 10" className="mr-[18px]">
          <path d="M0 0 10 10M10 0 0 10" stroke="#222" />
        </svg>
      </div>
    </div>
    <div className="h-[596px] shrink-0 flex">
      <div className="w-[377px] shrink-0 overflow-hidden pl-[3px] pt-[3px] text-[10.700px] text-[#111]">
        {sections.map(([text, sub], i) => (
          <div key={text} className="h-[15.080px] flex items-center whitespace-nowrap">
            <CheckBox blue={i === 11} />
            <span className={sub ? "ml-[15px]" : "ml-[3px]"}>{sub ? `- ${text}` : text}</span>
          </div>
        ))}
      </div>
      <div className="w-[15px] ml-[1px] shrink-0 flex flex-col items-center pt-[5px]">
        <Chev dir="up" />
        <div className="mt-[3px] w-full h-[493px] bg-[#c8c8c8]" />
        <div className="mt-auto mb-[3px]"><Chev dir="down" /></div>
      </div>
    </div>
    <div className="mt-[9px] flex justify-end pr-[8px] gap-[9px] text-[11px] text-[#111]">
      <div className="w-[93px] h-[20px] flex items-center bg-[#e1e1e1] border-2 border-[#3a86c8] pl-[4px]">
        <Check color="#5f9e22" />
        <span className="flex-1 text-center pr-[16px]">OK</span>
      </div>
      <div className="w-[93px] h-[20px] flex items-center bg-[#e1e1e1] border border-[#adadad] pl-[6px]">
        <Cross />
        <span className="flex-1 text-center">Abbrechen</span>
      </div>
    </div>
  </div>
);

export default function App() {
  return (
    <div className="relative w-[1197px] h-[670px] overflow-hidden bg-white [font-family:Roboto,sans-serif]">
      <div className="h-[2px] flex">
        <div className="w-[925px] bg-[#8ba63a]" />
        <div className="w-[175px] bg-[#44658c]" />
        <div className="w-[18px] bg-[#8ba63a]" />
        <div className="flex-1 bg-[#b8b8b8]" />
      </div>
      <div className="pt-[644px] pl-[195px] text-[13px] leading-[15px] text-[#444] whitespace-nowrap">
        <div>gewährter Person oben)</div>
        <div>Es wird ein Licht mit intelligenter Anwendung der Fläch</div>
      </div>
      <MainWindow />
      <ReportDialog />
      <SectionsDialog />
    </div>
  );
}
